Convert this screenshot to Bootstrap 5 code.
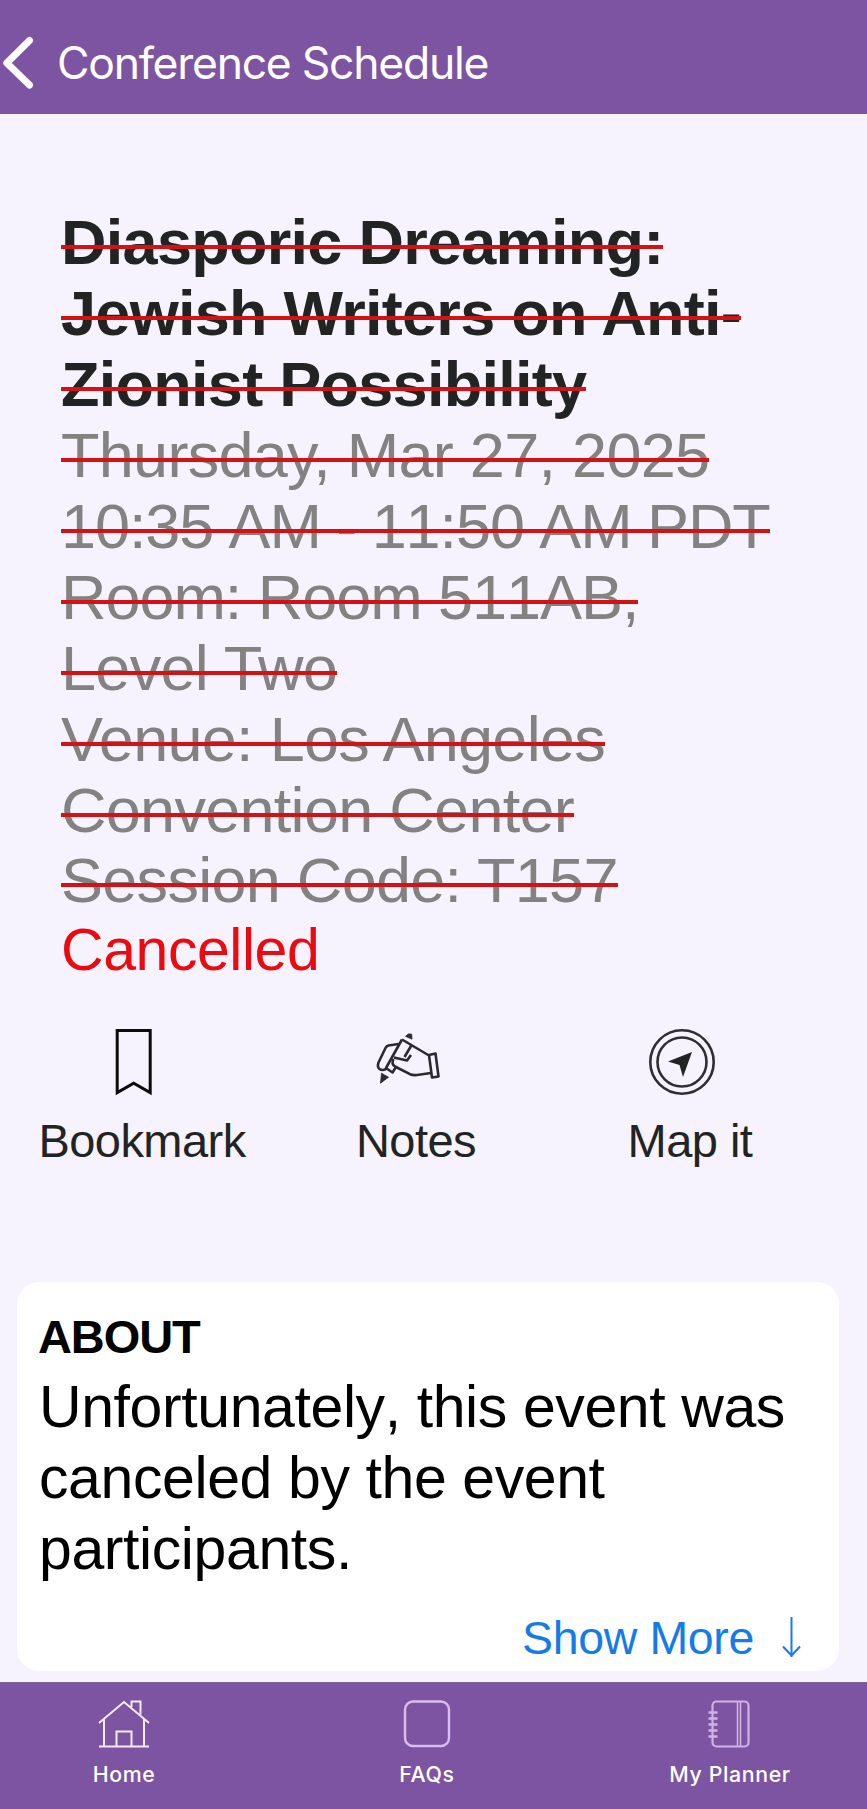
<!DOCTYPE html>
<html lang="en">
<head>
<meta charset="utf-8">
<meta name="viewport" content="width=device-width, initial-scale=1">
<title>Conference Schedule</title>
<link href="https://cdn.jsdelivr.net/npm/bootstrap@5.3.0/dist/css/bootstrap.min.css" rel="stylesheet">
<style>
:root { --brand: #7d54a1; --page: #f6f3fe; --ink: #222423; }
body { background: var(--page); font-family: "Liberation Sans", Arial, sans-serif; color: #000; height: 1809px; overflow: hidden; }
.topbar { height: 114px; background: var(--brand); color: #fff; padding: 12px 0 0 2px; }
.topbar h1 { font: 400 44.5px/52px Inter, sans-serif; letter-spacing: -1.27px; margin-left: 23px; }
.session { padding: 93.3px 0 0 61px; font-size: 63px; line-height: 70.9px; white-space: nowrap; }
.session .ln { display: table; position: relative; letter-spacing: -.72px; }
.session .ln::after { content: ""; position: absolute; left: 0; right: 0; top: 38px; height: 4px; background: #d41214; }
.session .digits { font-kerning: none; letter-spacing: -1.05px; }
.session .hours { word-spacing: -1px; letter-spacing: -1.09px; }
.session h2 { font-size: 63px; line-height: 70.9px; color: var(--ink); }
.when { color: #828282; }
.cancelled { color: #ea0a10; font-size: 59px; line-height: 66px; letter-spacing: -.45px; margin-top: 1px; }
.actions { margin: 45px 0 0 5px; width: 822px; color: var(--ink); font-size: 47px; line-height: 54px; letter-spacing: -.55px; }
.actions svg { margin-right: 15px; margin-bottom: 18px; }
.about { margin: 114px 28px 0 17px; height: 389px; border-radius: 22px; padding: 28px 38px 0 21px; }
.about h3 { font-size: 47px; line-height: 54px; letter-spacing: -1.1px; }
.about p { font-size: 59px; line-height: 70.6px; white-space: nowrap; margin: 8px 0 0 1px; letter-spacing: -.4px; font-kerning: none; }
.more { color: #147be9; font-size: 46.5px; line-height: 54px; letter-spacing: -.35px; margin-top: 27px; gap: 28px; }
.tabs { background: var(--brand); border-top: 1px solid #77618e; height: 128px; margin-top: 11px; color: #fff; font: 500 21.3px/26px Inter, sans-serif; letter-spacing: .65px; padding-top: 16px; }
.tabs svg { margin-bottom: 12px; }
.tab-side { width: 248px; }
.tab-mid { width: 358px; }
</style>
</head>
<body>
<header class="topbar d-flex align-items-center">
  <svg width="32" height="54" viewBox="0 0 32 54" fill="none" stroke="#fff" stroke-width="7" stroke-linecap="round" stroke-linejoin="round"><path d="M27.500 4.500 4.800 27 27.500 49"/></svg>
  <h1 class="mb-0">Conference Schedule</h1>
</header>

<main>
  <section class="session">
    <h2 class="fw-bold mb-0">
      <span class="ln">Diasporic Dreaming:</span>
      <span class="ln">Jewish Writers on Anti-</span>
      <span class="ln">Zionist Possibility</span>
    </h2>
    <div class="when">
      <span class="ln">Thursday, Mar 27, 2025</span>
      <span class="ln digits hours">10:35 AM - 11:50 AM PDT</span>
      <span class="ln digits">Room: Room 511AB,</span>
      <span class="ln">Level Two</span>
      <span class="ln">Venue: Los Angeles</span>
      <span class="ln">Convention Center</span>
      <span class="ln">Session Code: T157</span>
    </div>
    <div class="cancelled">Cancelled</div>
  </section>

  <section class="actions row g-0 text-center">
    <div class="col-4 d-flex flex-column align-items-center">
      <svg width="38" height="68" viewBox="0 0 38 68" fill="none" stroke="#0c0c0c" stroke-width="3"><path d="M2.200 2.500H35.200V64.600L18.700 55.200 2.200 64.600Z"/></svg>
      <span>Bookmark</span>
    </div>
    <div class="col-4 d-flex flex-column align-items-center">
      <svg width="68" height="68" viewBox="0 0 68 68" fill="none" stroke="#2b2a30" stroke-width="2.600" stroke-linejoin="round">
        <path d="M28 11.500 12 40 18.500 44.500 22 39M37 18 30.500 29M28 11.500 55 27.500M24.500 16 14.500 17.500Q12.500 18 11.500 20L4.500 34.500Q3 39 5.500 41Q8 43 12 41"/>
        <path d="M20 29.500 33 32.500 37 27M19.500 31Q17 36 21 38.500L36 46.200Q39 47.500 43 47L57 45M55 27 61.500 25.500 64.500 48.500 58 49.500Z"/>
        <path d="M31.500 8.300Q34.500 4.500 37.700 6.200L38 11.200ZM7.500 45.200 14.500 49.200 6.500 55.200Z" fill="#2b2a30" stroke-width=".8"/>
      </svg>
      <span>Notes</span>
    </div>
    <div class="col-4 d-flex flex-column align-items-center">
      <svg width="68" height="68" viewBox="0 0 68 68" fill="none" stroke="#2f2e33" stroke-width="2.600"><circle cx="34" cy="34" r="31.700"/><circle cx="34" cy="34" r="24.500"/><path d="M44 24 20 33.500 31.500 37 35 49Z" fill="#222423" stroke="none"/></svg>
      <span>Map it</span>
    </div>
  </section>

  <section class="about card border-0">
    <h3 class="fw-bold mb-0">ABOUT</h3>
    <p>Unfortunately, this event was<br>canceled by the event<br>participants.</p>
    <a class="more d-flex justify-content-end align-items-center text-decoration-none" href="#">
      <span>Show More</span>
      <svg width="19" height="44" viewBox="0 0 19 44" fill="none" stroke="currentColor" stroke-width="2"><path d="M9.500 1V41M1 30.500 9.500 39.500 18 30.500"/></svg>
    </a>
  </section>
</main>

<nav class="tabs d-flex text-center">
  <div class="tab-side d-flex flex-column align-items-center">
    <svg width="52" height="50" viewBox="0 0 52 50" fill="none" stroke="#f6eafd" stroke-width="2"><path d="M1 24 26 3 51 24M6 20.500V46.500M46 20.500V46.500M1 47.500H51M18.500 47V32.500H33.500V47M33.500 8V2.500H42.500V15.500"/></svg>
    <span>Home</span>
  </div>
  <div class="tab-mid d-flex flex-column align-items-center">
    <svg width="50" height="50" viewBox="0 0 50 50" fill="none" stroke="#d9bdf0" stroke-width="2.400"><rect x="3" y="2.500" width="44" height="44.500" rx="8"/></svg>
    <span>FAQs</span>
  </div>
  <div class="tab-side d-flex flex-column align-items-center">
    <svg width="46" height="50" viewBox="0 0 46 50" fill="none" stroke="#d0b2e6" stroke-width="2.200"><rect x="5.500" y="2.500" width="36" height="45" rx="4"/><path d="M30.500 3V47M33.500 3V47" stroke-width="1.600"/><path d="M1.500 13.500H10.500M1.500 19.500H10.500M1.500 25.500H10.500M1.500 31.500H10.500M1.500 37.500H10.500" stroke-width="2.600"/></svg>
    <span>My Planner</span>
  </div>
</nav>
<script src="https://cdn.jsdelivr.net/npm/bootstrap@5.3.0/dist/js/bootstrap.bundle.min.js"></script>
</body>
</html>
